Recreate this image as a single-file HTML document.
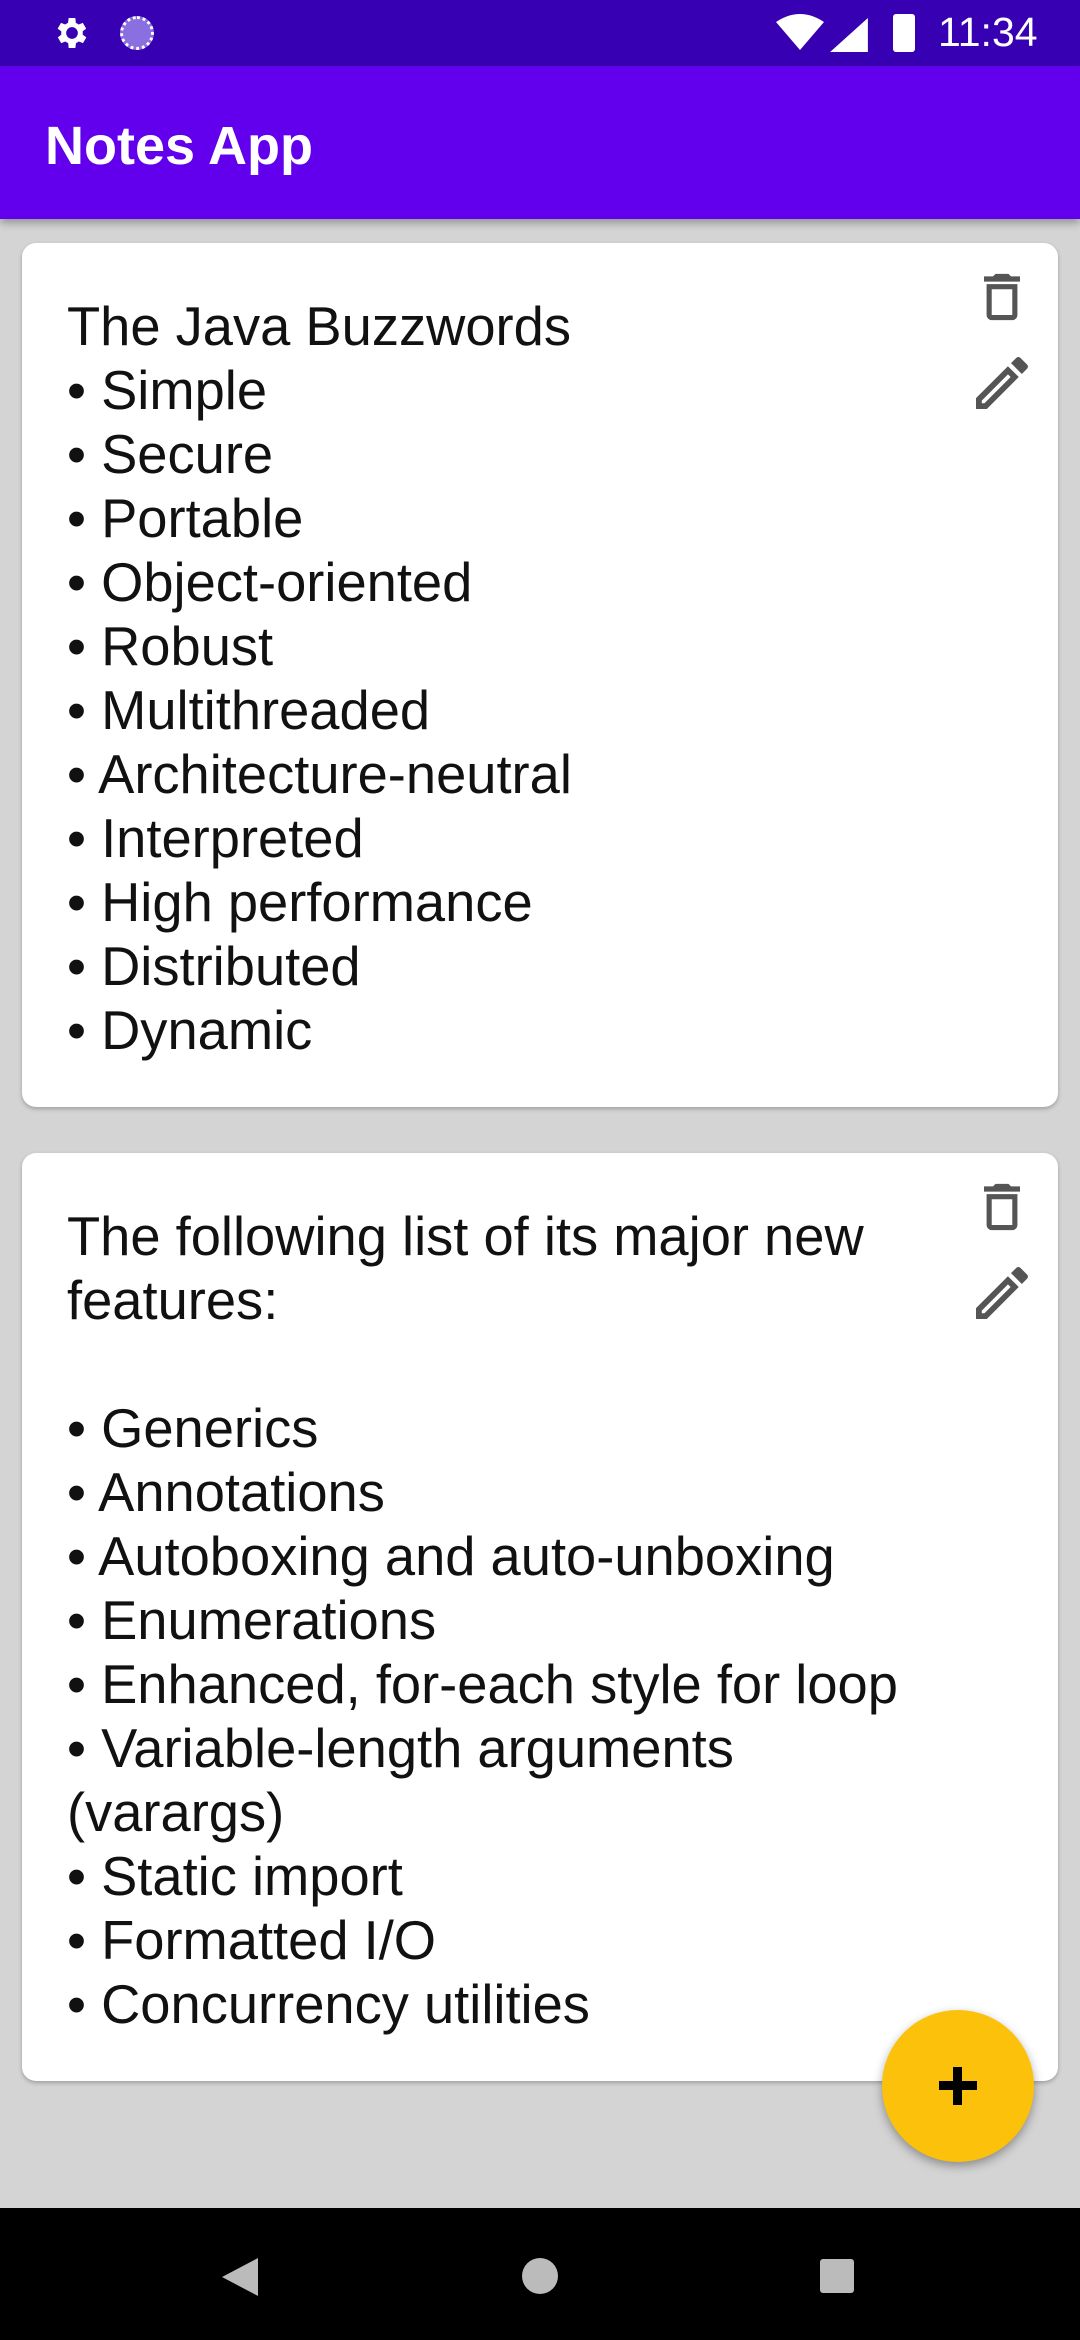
<!DOCTYPE html>
<html><head><meta charset="utf-8"><style>
body{margin:0;width:1080px;height:2340px;background:#d4d4d4;font-family:"Liberation Sans",sans-serif;position:relative;overflow:hidden}
.sb{position:absolute;left:0;top:0;width:1080px;height:66px;background:#3700b3;color:#fff}
.ab{position:absolute;left:0;top:66px;width:1080px;height:153px;background:#6200ee;box-shadow:0 4px 8px rgba(0,0,0,.3)}
.ab span{position:absolute;left:45px;top:80px;transform:translateY(-50%);font-size:54px;font-weight:bold;color:#fff}
.card{position:absolute;left:22px;width:1036px;background:#fff;border-radius:14px;box-shadow:0 2px 4px rgba(0,0,0,.25)}
.t{position:absolute;left:45px;font-size:54.3px;line-height:64px;color:#111;white-space:pre}
.ic{position:absolute;left:962px}
.nav{position:absolute;left:0;top:2208px;width:1080px;height:132px;background:#000}
.fab{position:absolute;left:882px;top:2010px;width:152px;height:152px;border-radius:50%;background:#fbc10b;box-shadow:0 4px 10px rgba(0,0,0,.35)}
</style></head><body>
<div class="sb">
<svg style="position:absolute;left:50px;top:13px" width="44" height="40" viewBox="0 0 24 24"><path fill="#fff" d="M19.4 13a7.5 7.5 0 0 0 0-2l2.1-1.6-2-3.5-2.5 1a7 7 0 0 0-1.7-1L15 3h-4l-.4 2.9a7 7 0 0 0-1.7 1l-2.5-1-2 3.5L6.6 11a7.5 7.5 0 0 0 0 2l-2.1 1.6 2 3.5 2.5-1a7 7 0 0 0 1.7 1L11 21h4l.4-2.9a7 7 0 0 0 1.7-1l2.5 1 2-3.5zM13 15.5a3.5 3.5 0 1 1 0-7 3.5 3.5 0 0 1 0 7z" transform="translate(-1 0)"/></svg>
<div style="position:absolute;left:120px;top:16px;width:34px;height:34px;border-radius:50%;border:3px dotted #fff;box-sizing:border-box;background:#8a6fe0"></div>
<svg style="position:absolute;left:776px;top:14px" width="48" height="38" viewBox="0 0 24 19"><path fill="#fff" d="M12 18L0 4Q12-4 24 4z"/></svg>
<svg style="position:absolute;left:830px;top:18px" width="38" height="34" viewBox="0 0 20 18"><path fill="#fff" d="M20 0V18H0z"/></svg>
<div style="position:absolute;left:893px;top:14px;width:22px;height:38px;background:#fff;border-radius:3px"></div>
<div style="position:absolute;left:938px;top:9px;font-size:41px;color:#fff">11:34</div>
</div>
<div class="ab"><span>Notes App</span></div>

<div class="card" style="top:243px;height:864px">
<div class="t" style="top:52px">The Java Buzzwords
• Simple
• Secure
• Portable
• Object-oriented
• Robust
• Multithreaded
• Architecture-neutral
• Interpreted
• High performance
• Distributed
• Dynamic</div>
<svg class="ic" style="top:30px" width="36" height="48" viewBox="5 3 14 18"><path fill="#555" d="M6 19a2 2 0 0 0 2 2h8a2 2 0 0 0 2-2V7H6zm2-10h8v10H8zM15.5 4l-1-1h-5l-1 1H5v2h14V4z"/></svg>
<svg class="ic" style="top:114px;left:954px" width="52" height="52" viewBox="3 3 18 18"><path fill="#555" d="M3 17.25V21h3.75L17.8 9.94l-3.75-3.75zM5.92 19H5v-.92l9.06-9.06.92.92zM20.7 7.04a1 1 0 0 0 0-1.41l-2.34-2.34a1 1 0 0 0-1.41 0l-1.83 1.83 3.75 3.75z"/></svg>
</div>

<div class="card" style="top:1153px;height:928px">
<div class="t" style="top:52px">The following list of its major new
features:

• Generics
• Annotations
• Autoboxing and auto-unboxing
• Enumerations
• Enhanced, for-each style for loop
• Variable-length arguments
(varargs)
• Static import
• Formatted I/O
• Concurrency utilities</div>
<svg class="ic" style="top:30px" width="36" height="48" viewBox="5 3 14 18"><path fill="#555" d="M6 19a2 2 0 0 0 2 2h8a2 2 0 0 0 2-2V7H6zm2-10h8v10H8zM15.5 4l-1-1h-5l-1 1H5v2h14V4z"/></svg>
<svg class="ic" style="top:114px;left:954px" width="52" height="52" viewBox="3 3 18 18"><path fill="#555" d="M3 17.25V21h3.75L17.8 9.94l-3.75-3.75zM5.92 19H5v-.92l9.06-9.06.92.92zM20.7 7.04a1 1 0 0 0 0-1.41l-2.34-2.34a1 1 0 0 0-1.41 0l-1.83 1.83 3.75 3.75z"/></svg>
</div>

<div class="fab"><div style="position:absolute;left:57px;top:71px;width:38px;height:9px;background:#000"></div><div style="position:absolute;left:71px;top:57px;width:9px;height:38px;background:#000"></div></div>

<div class="nav">
<svg style="position:absolute;left:222px;top:50px" width="36" height="38" viewBox="0 0 18 19"><path fill="#bbb" d="M18 0V19L0 9.5z"/></svg>
<div style="position:absolute;left:522px;top:50px;width:36px;height:36px;border-radius:50%;background:#bbb"></div>
<div style="position:absolute;left:820px;top:51px;width:34px;height:34px;border-radius:3px;background:#bbb"></div>
</div>
</body></html>
